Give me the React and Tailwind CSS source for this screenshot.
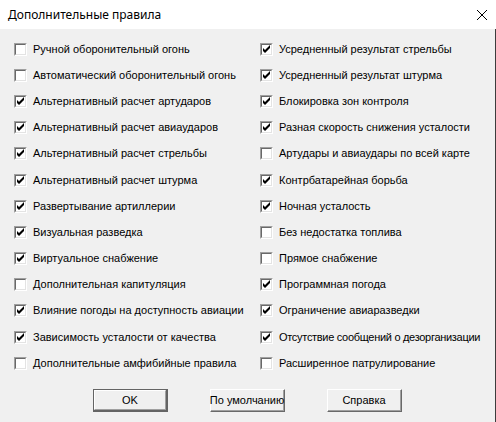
import React from "react";

const left = [
  ["Ручной оборонительный огонь", false],
  ["Автоматический оборонительный огонь", false],
  ["Альтернативный расчет артударов", true],
  ["Альтернативный расчет авиаударов", true],
  ["Альтернативный расчет стрельбы", true],
  ["Альтернативный расчет штурма", true],
  ["Развертывание артиллерии", true],
  ["Визуальная разведка", true],
  ["Виртуальное снабжение", true],
  ["Дополнительная капитуляция", false],
  ["Влияние погоды на доступность авиации", true],
  ["Зависимость усталости от качества", true],
  ["Дополнительные амфибийные правила", false],
];

const right = [
  ["Усредненный результат стрельбы", true],
  ["Усредненный результат штурма", true],
  ["Блокировка зон контроля", true],
  ["Разная скорость снижения усталости", true],
  ["Артудары и авиаудары по всей карте", false],
  ["Контрбатарейная борьба", true],
  ["Ночная усталость", true],
  ["Без недостатка топлива", false],
  ["Прямое снабжение", false],
  ["Программная погода", true],
  ["Ограничение авиаразведки", true],
  ["Отсутствие сообщений о дезорганизации", true, true],
  ["Расширенное патрулирование", false],
];

function Box({ checked }) {
  return (
    <div className="w-[13px] h-[13px] shrink-0 border-t border-l border-t-[#a0a0a0] border-l-[#a0a0a0] border-b border-r border-b-white border-r-white">
      <div className="w-full h-full border-t border-l border-t-[#696969] border-l-[#696969] border-b border-r border-b-[#e3e3e3] border-r-[#e3e3e3] bg-white relative">
        {checked && (
          <svg className="absolute left-0 top-0" width="9" height="9" viewBox="0 0 9 9">
            <path d="M1 3 L1 6 L3 8 L8 3 L8 0 L3 5 Z" fill="#000" />
          </svg>
        )}
      </div>
    </div>
  );
}

function Row({ label, checked, tight }) {
  return (
    <div className="h-[26.2px] flex items-center gap-[6px]">
      <Box checked={checked} />
      <span
        className={
          tight
            ? "text-[11px] leading-none text-black whitespace-nowrap tracking-[-0.3px]"
            : "text-[11px] leading-none text-black whitespace-nowrap"
        }
      >
        {label}
      </span>
    </div>
  );
}

function Btn({ children, def }) {
  if (def) {
    return (
      <div className="w-[75px] h-[23px] border border-[#646464] border-b-2 border-r-2">
        <div className="w-full h-full border-t border-l border-t-white border-l-white border-b border-r border-b-[#a0a0a0] border-r-[#a0a0a0] bg-[#f0f0f0] flex items-center justify-center text-[11px] text-black">
          {children}
        </div>
      </div>
    );
  }
  return (
    <div className="w-[75px] h-[23px] border-t border-l border-t-white border-l-white border-b border-r border-b-[#696969] border-r-[#696969]">
      <div className="w-full h-full border-b border-r border-b-[#a0a0a0] border-r-[#a0a0a0] bg-[#f0f0f0] flex items-center justify-center text-[11px] text-black whitespace-nowrap">
        {children}
      </div>
    </div>
  );
}

export default function App() {
  return (
    <div
      className="w-[496px] h-[422px] bg-[#f0f0f0] flex flex-col overflow-hidden"
      style={{ fontFamily: '"Liberation Sans", Arial, sans-serif' }}
    >
      <div className="h-[29px] bg-white flex items-center justify-between pl-[8px] pr-[6px] shrink-0">
        <span
          className="text-[12px] text-black"
          style={{ fontFamily: '"Noto Sans", "Open Sans", sans-serif' }}
        >
          Дополнительные правила
        </span>
        <svg width="12" height="12" viewBox="0 0 12 12" className="mr-[2px]">
          <path d="M1 1 L11 11 M11 1 L1 11" stroke="#000" strokeWidth="1" />
        </svg>
      </div>
      <div className="flex-1 flex flex-col border-r border-r-[#3c3c3c]">
        <div className="flex pt-[7px]">
          <div className="w-[260px] pl-[14px] shrink-0">
            {left.map(([l, c]) => (
              <Row key={l} label={l} checked={c} />
            ))}
          </div>
          <div className="flex-1">
            {right.map(([l, c, t]) => (
              <Row key={l} label={l} checked={c} tight={t} />
            ))}
          </div>
        </div>
        <div className="flex pl-[93px] gap-[42px] mt-[13px]">
          <Btn def>OK</Btn>
          <Btn>По умолчанию</Btn>
          <Btn>Справка</Btn>
        </div>
      </div>
    </div>
  );
}
